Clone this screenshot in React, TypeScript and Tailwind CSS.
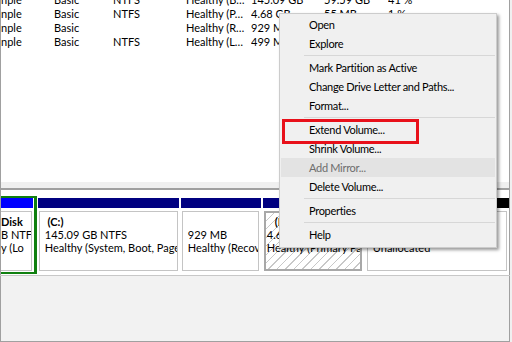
import React from 'react';

const font = { fontFamily: 'Lato, "Noto Sans", sans-serif' };

const rows = [
  ['nple', 'Basic', 'NTFS', 'Healthy (B…', '145.09 GB', '59.59 GB', '41 %'],
  ['nple', 'Basic', 'NTFS', 'Healthy (P…', '4.68 GB', '55 MB', '1 %'],
  ['nple', 'Basic', '', 'Healthy (R…', '929 MB', '', ''],
  ['nple', 'Basic', 'NTFS', 'Healthy (L…', '499 MB', '', ''],
];

type Item = { label?: string; sep?: boolean; disabled?: boolean };

const menu: Item[] = [
  { label: 'Open' },
  { label: 'Explore' },
  { sep: true },
  { label: 'Mark Partition as Active' },
  { label: 'Change Drive Letter and Paths...' },
  { label: 'Format...' },
  { sep: true },
  { label: 'Extend Volume...' },
  { label: 'Shrink Volume...' },
  { label: 'Add Mirror...', disabled: true },
  { label: 'Delete Volume...' },
  { sep: true },
  { label: 'Properties' },
  { sep: true },
  { label: 'Help' },
];

function VolumeText({ lines, first }: { lines: string[]; first?: string }) {
  return (
    <div className="pt-[3px] pl-[5px] text-[11px] leading-[13px] text-black whitespace-nowrap overflow-hidden">
      <div className="font-bold h-[13px]">{first}</div>
      {lines.map((l, i) => (
        <div key={i} className="h-[13px]">{l}</div>
      ))}
    </div>
  );
}

export default function App() {
  return (
    <div className="w-[512px] h-[342px] relative overflow-hidden bg-[#f0f0f0] flex flex-col" style={font}>
      {/* volume list */}
      <div className="h-[182px] w-[510px] bg-white border-x border-[#a0a0a0] overflow-hidden">
        <div className="-mt-[7px]">
          {rows.map((r, i) => (
            <div
              key={i}
              className="grid grid-cols-[53px_59px_73px_65px_73px_64px_1fr] h-[14px] leading-[14px] text-[11px] text-black whitespace-nowrap"
            >
              {r.map((c, j) => (
                <div key={j} className="overflow-hidden">{c}</div>
              ))}
            </div>
          ))}
        </div>
      </div>
      <div className="h-[6px] w-[510px] bg-[#f0f0f0] border-x border-[#a0a0a0]" />
      <div className="h-[2px] w-[510px] bg-[#a0a0a0]" />

      {/* disk map */}
      <div className="h-[85px] w-[510px] bg-white border-x border-[#a0a0a0] flex items-start">
        <div className="mt-[6px] w-[36px] h-[78px] border-[#108010] border-y-2 border-r-[3px] flex flex-col">
          <div className="h-[10px] w-[32px] bg-[#0000ff]" />
          <div className="mt-[3px] h-[60px] w-[31px] border border-[#c4c4c4] border-l-0">
            <div className="pt-[3px] text-[11px] leading-[13px] whitespace-nowrap overflow-hidden">
              <div className="h-[13px] font-bold">Disk</div>
              <div className="h-[13px]">B NTF</div>
              <div className="h-[13px]">y (Lo</div>
            </div>
          </div>
        </div>

        <div className="mt-[8px] ml-[1px] w-[141px] flex flex-col">
          <div className="h-[10px] bg-[#000080]" />
          <div className="mt-[3px] mx-[1px] h-[60px] border border-[#c4c4c4]">
            <VolumeText first={'\u00a0(C:)'} lines={['145.09 GB NTFS', 'Healthy (System, Boot, Page']} />
          </div>
        </div>

        <div className="mt-[8px] ml-[2px] w-[80px] flex flex-col">
          <div className="h-[10px] bg-[#000080]" />
          <div className="mt-[3px] ml-[1px] mr-[2px] h-[60px] border border-[#c4c4c4]">
            <VolumeText first="" lines={['929 MB', 'Healthy (Recov']} />
          </div>
        </div>

        <div className="mt-[8px] ml-[2px] w-[99px] flex flex-col">
          <div className="h-[10px] bg-[#000080]" />
          <div className="mt-[3px] ml-[1px] h-[60px] border-2 border-[#a8a8a8] bg-[repeating-linear-gradient(135deg,#ffffff_0px,#ffffff_5px,#c8c8c8_5px,#c8c8c8_6px)]">
            <div className="pt-[2px] pl-[1px] text-[11px] leading-[13px] whitespace-nowrap overflow-hidden">
              <div className="h-[13px] font-bold pl-[8px]">(I:)</div>
              <div className="h-[13px]">4.68 GB NTFS</div>
              <div className="h-[13px]">Healthy (Primary Pa</div>
            </div>
          </div>
        </div>

        <div className="mt-[8px] ml-[3px] w-[145px] flex flex-col">
          <div className="h-[10px] bg-black" />
          <div className="mt-[3px] mx-[2px] h-[60px] border border-[#c4c4c4]">
            <VolumeText first="" lines={['', 'Unallocated']} />
          </div>
        </div>
      </div>
      <div className="h-[1px] w-[510px] bg-[#c8c8c8]" />
      <div className="flex-1 w-[510px] bg-[#f2f2f2] border-x border-b border-[#a0a0a0]" />

      {/* context menu */}
      <div className="absolute left-[279px] top-[13px] w-[218px] bg-[#f0f0f0] border border-[#cccccc] pt-[1px] pb-[3px] shadow-[2px_2px_3px_rgba(0,0,0,0.4)] tracking-[-0.3px]">
        {menu.map((m, i) =>
          m.sep ? (
            <div key={i} className="h-[5px] flex items-center pl-[24px] pr-[1px]">
              <div className="h-[1px] w-full bg-[#d7d7d7]" />
            </div>
          ) : (
            <div
              key={i}
              className={
                m.disabled
                  ? 'h-[19px] leading-[19px] pl-[28px] text-[11px] text-[#6d6d6d] bg-[#e3e3e3] mx-[1px]'
                  : 'h-[19px] leading-[19px] pl-[29px] text-[11px] text-black'
              }
            >
              {m.label}
            </div>
          )
        )}
      </div>
      <div className="absolute left-[282px] top-[119px] w-[137px] h-[25px] border-[3px] border-[#e8101a]" />
    </div>
  );
}
